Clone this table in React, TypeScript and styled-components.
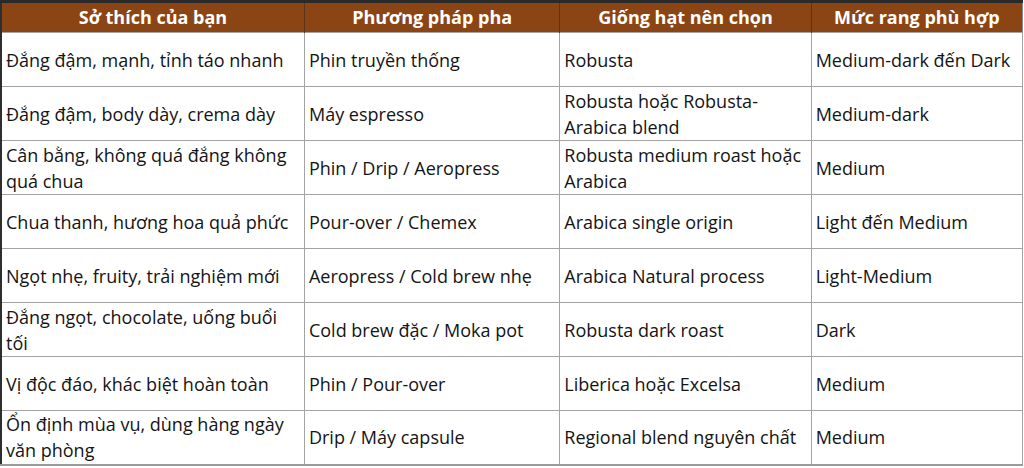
import React from 'react';
import styled, { createGlobalStyle } from 'styled-components';

const GlobalStyle = createGlobalStyle`
  html, body {
    margin: 0;
    padding: 0;
    background: #ffffff;
  }
  body {
    font-family: 'Open Sans', 'Noto Sans', sans-serif;
  }
`;

interface Row {
  taste: string;
  method: string;
  bean: string;
  roast: string;
}

const rows: Row[] = [
  {
    taste: 'Đắng đậm, mạnh, tỉnh táo nhanh',
    method: 'Phin truyền thống',
    bean: 'Robusta',
    roast: 'Medium-dark đến Dark',
  },
  {
    taste: 'Đắng đậm, body dày, crema dày',
    method: 'Máy espresso',
    bean: 'Robusta hoặc Robusta-Arabica blend',
    roast: 'Medium-dark',
  },
  {
    taste: 'Cân bằng, không quá đắng không quá chua',
    method: 'Phin / Drip / Aeropress',
    bean: 'Robusta medium roast hoặc Arabica',
    roast: 'Medium',
  },
  {
    taste: 'Chua thanh, hương hoa quả phức',
    method: 'Pour-over / Chemex',
    bean: 'Arabica single origin',
    roast: 'Light đến Medium',
  },
  {
    taste: 'Ngọt nhẹ, fruity, trải nghiệm mới',
    method: 'Aeropress / Cold brew nhẹ',
    bean: 'Arabica Natural process',
    roast: 'Light-Medium',
  },
  {
    taste: 'Đắng ngọt, chocolate, uống buổi tối',
    method: 'Cold brew đặc / Moka pot',
    bean: 'Robusta dark roast',
    roast: 'Dark',
  },
  {
    taste: 'Vị độc đáo, khác biệt hoàn toàn',
    method: 'Phin / Pour-over',
    bean: 'Liberica hoặc Excelsa',
    roast: 'Medium',
  },
  {
    taste: 'Ổn định mùa vụ, dùng hàng ngày văn phòng',
    method: 'Drip / Máy capsule',
    bean: 'Regional blend nguyên chất',
    roast: 'Medium',
  },
];

const headers = ['Sở thích của bạn', 'Phương pháp pha', 'Giống hạt nên chọn', 'Mức rang phù hợp'];
const widths = [303, 255, 251, 211];

const Table = styled.table`
  width: 1023px;
  border-collapse: collapse;
  table-layout: fixed;
  border-top: 3px solid #2a2a2a;
  border-left: 2px solid #2e2e2e;
  border-right: 1px solid #8c8c8c;
  border-bottom: 2px solid #9a9a9a;
`;

const HeadCell = styled.th`
  height: 30px;
  padding: 0 4px;
  background: #8b4515;
  color: #ffffff;
  font-weight: 700;
  font-size: 18px;
  line-height: 29px;
  text-align: center;
  white-space: nowrap;
  border-left: 1px solid #5a3418;
  box-sizing: border-box;
  &:first-child {
    border-left: none;
  }
`;

const Cell = styled.td`
  height: 54px;
  padding: 0 2px 0 4px;
  color: #141414;
  font-size: 18px;
  line-height: 26px;
  text-align: left;
  vertical-align: middle;
  border: 1px solid #a3a3a3;
  box-sizing: border-box;
  &:first-child {
    border-left: none;
  }
`;

export default function App() {
  return (
    <>
      <GlobalStyle />
      <Table>
        <colgroup>
          {widths.map((w, i) => (
            <col key={i} style={{ width: w }} />
          ))}
        </colgroup>
        <thead>
          <tr>
            {headers.map((h) => (
              <HeadCell key={h}>{h}</HeadCell>
            ))}
          </tr>
        </thead>
        <tbody>
          {rows.map((r, i) => (
            <tr key={i}>
              <Cell>{r.taste}</Cell>
              <Cell>{r.method}</Cell>
              <Cell>{r.bean}</Cell>
              <Cell>{r.roast}</Cell>
            </tr>
          ))}
        </tbody>
      </Table>
    </>
  );
}
